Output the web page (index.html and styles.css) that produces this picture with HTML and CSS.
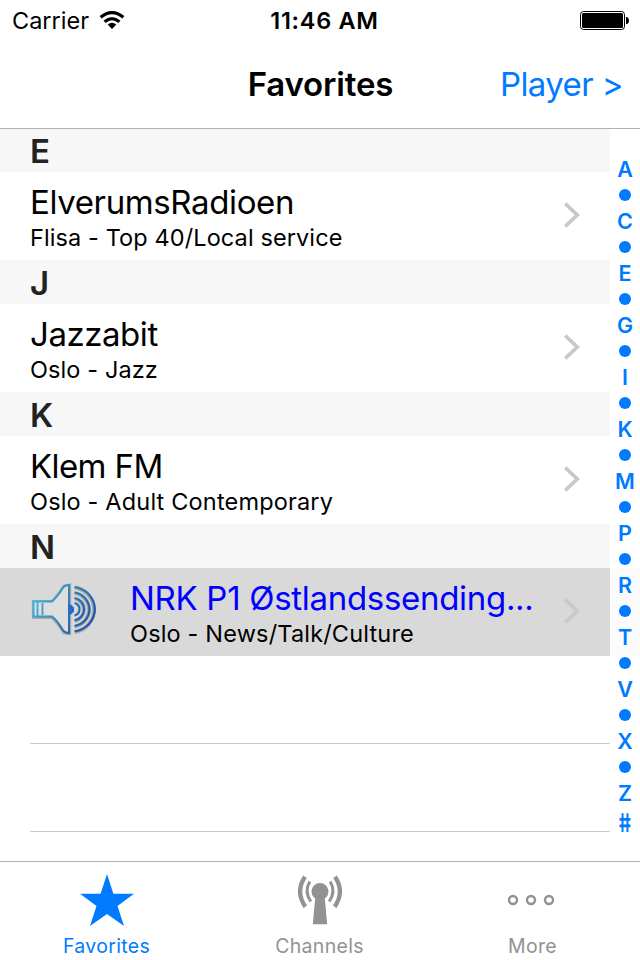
FILE: index.html
```html
<!DOCTYPE html>
<html lang="en">
<head>
<meta charset="utf-8">
<title>Favorites</title>
<link rel="stylesheet" href="styles.css">
</head>
<body>
<svg class="defs" width="0" height="0" aria-hidden="true">
  <symbol id="chevron" viewBox="0 0 18 28"><path d="M2.2 2.6 14.3 14 2.2 25.4" fill="none" stroke="#c7c7cc" stroke-width="3.6"/></symbol>
</svg>
<div class="screen">
  <div class="status">
    <div class="carrier"><span>Carrier</span>
      <svg class="wifi" width="26" height="18" viewBox="0 0 26 18"><g fill="none" stroke="#000" stroke-width="3.2"><path d="M1.6 6.3Q13-3 24.4 6.3"/><path d="M5.6 10.8Q13 4.6 20.4 10.8"/></g><path d="M8.7 13.5Q13 10 17.3 13.5L13 18Z"/></svg>
    </div>
    <div class="time">11:46 AM</div>
    <svg class="battery" width="50" height="20" viewBox="0 0 50 20"><rect x=".5" y=".5" width="44" height="18" rx="3" fill="#fff" stroke="#000"/><rect x="2" y="2" width="41" height="15" rx="1.5"/><path d="M46 6h1.2q1.8 1.2 1.8 3.5t-1.8 3.5H46Z"/></svg>
  </div>
  <header class="nav">
    <h1 class="title">Favorites</h1>
    <a class="player">Player &gt;</a>
  </header>
  <main class="content">
    <div class="list">
      <h2 class="section">E</h2>
      <div class="row"><div class="text"><div class="name n1">ElverumsRadioen</div><div class="sub s1">Flisa - Top 40/Local service</div></div><svg class="chev"><use href="#chevron"/></svg></div>
      <h2 class="section">J</h2>
      <div class="row"><div class="text"><div class="name n2">Jazzabit</div><div class="sub s1">Oslo - Jazz</div></div><svg class="chev"><use href="#chevron"/></svg></div>
      <h2 class="section">K</h2>
      <div class="row"><div class="text"><div class="name n3">Klem FM</div><div class="sub s2">Oslo - Adult Contemporary</div></div><svg class="chev"><use href="#chevron"/></svg></div>
      <h2 class="section">N</h2>
      <div class="row selected">
        <svg class="speaker" width="70" height="56" viewBox="30 581 70 56">
          <defs><linearGradient id="blue" gradientUnits="userSpaceOnUse" x1="35" y1="595" x2="90" y2="630"><stop offset="0" stop-color="#3fb9df"/><stop offset=".5" stop-color="#2f7fb5"/><stop offset="1" stop-color="#164fb0"/></linearGradient></defs>
          <g fill="none" stroke="#888" stroke-width="3.8" opacity=".6" transform="translate(.3 .5)"><path d="M33.5 601.5H52Q59 594 64 586L69 585V633L64 632Q59 623 52 616.5H33.5Z"/><path d="M74.5 587A22.5 22.5 0 0 1 74.5 631.5M74.5 592.5A17 17 0 0 1 74.5 626M74.5 598A11.5 11.5 0 0 1 74.5 620.5"/></g>
          <path d="M33.5 601.5H52C57 597 61 591 63.5 587Q65.5 585 69 585V633Q65.5 633 63.5 631C61 627 57 620 52 616.5H33.5Z" fill="#dedede" stroke="url(#blue)" stroke-width="2"/>
          <path d="M37.5 602V616M42.5 603V615" fill="none" stroke="url(#blue)" stroke-width="1.8"/>
          <path d="M74.5 587A22.5 22.5 0 0 1 74.5 631.5M74.5 592.5A17 17 0 0 1 74.5 626M74.5 598A11.5 11.5 0 0 1 74.5 620.5M74.5 603A6.5 6.5 0 0 1 74.5 615.5" transform="translate(-4.47 0) scale(1.06 1)" fill="none" stroke="url(#blue)" stroke-width="2.1"/>
          <path d="M68 604.5h3l3 3v4l-3 3h-3z" fill="#2469c8"/>
        </svg>
        <div class="text"><div class="name n4">NRK P1 Østlandssending...</div><div class="sub s2">Oslo - News/Talk/Culture</div></div><svg class="chev"><use href="#chevron"/></svg></div>
      <div class="row empty"></div>
      <div class="row empty"></div>
    </div>
    <nav class="index">
      <b>A</b><i></i><b>C</b><i></i><b>E</b><i></i><b>G</b><i></i><b>I</b><i></i><b>K</b><i></i><b>M</b><i></i><b>P</b><i></i><b>R</b><i></i><b>T</b><i></i><b>V</b><i></i><b>X</b><i></i><b>Z</b><b class="hash">#</b>
    </nav>
  </main>
  <footer class="tabs">
    <div class="tab active"><svg width="60" height="60" viewBox="77 870 60 60"><path d="M107 874 113.4 893.7H134L117.5 906 124 926 107 914 90 926 96.5 906 80 893.7H100.6Z" fill="#007aff"/></svg><span>Favorites</span></div>
    <div class="tab"><svg width="60" height="60" viewBox="290 870 60 60"><g fill="#929292"><circle cx="320" cy="891.5" r="8.5"/><path d="M315.5 895H324.5L327.2 924.3H312.8Z"/></g><g fill="none" stroke="#929292"><path d="M305 876.8Q295 891.5 305.3 906.7M335 876.8Q345 891.5 334.7 906.7" stroke-width="4.3"/><path d="M309.8 881.5Q303.8 891.5 310.8 901.5M330.2 881.5Q336.2 891.5 329.2 901.5" stroke-width="3"/></g></svg><span>Channels</span></div>
    <div class="tab"><svg width="60" height="60" viewBox="503 870 60 60"><g fill="none" stroke="#929292" stroke-width="2.4"><circle cx="513" cy="900" r="4"/><circle cx="531" cy="900" r="4"/><circle cx="549" cy="900" r="4"/></g></svg><span>More</span></div>
  </footer>
</div>
</body>
</html>
```
FILE: styles.css
```css
* { box-sizing: border-box; }
body { margin: 0; background: #fff; color: #000; font-family: Inter, "Liberation Sans", sans-serif; }
h1, h2 { margin: 0; }
.defs { position: absolute; }
.screen { width: 640px; height: 960px; display: flex; flex-direction: column; overflow: hidden; }
.status { height: 40px; display: grid; grid-template-columns: 1fr auto 1fr; line-height: 40px; font-size: 23.5px; padding: 0 10px 0 12px; }
.carrier { display: flex; }
.wifi { margin: 11px 0 0 10px; }
.time { font-weight: 600; padding: 1px 0 0 7px; letter-spacing: .7px; }
.carrier span { padding-top: 1px; }
.battery { justify-self: end; margin-top: 11px; }
.nav { height: 89px; display: grid; grid-template-columns: 1fr auto 1fr; line-height: 88px; border-bottom: 1px solid #b2b2b2; white-space: nowrap; }
.title { grid-column: 2; font-size: 33px; font-weight: 600; letter-spacing: -.15px; padding-left: 1px; }
.player { color: #007aff; font-size: 33px; justify-self: end; padding-right: 17px; letter-spacing: -.6px; }
.content { height: 732px; display: grid; grid-template-columns: 610px 30px; }
.section { height: 44px; padding-left: 30px; background: #f7f7f7; color: #222; font-size: 33px; line-height: 46px; font-weight: 600; }
.section:first-child { height: 43px; line-height: 44px; }
.row { height: 88px; display: flex; padding: 0 29px 0 30px; }
.text { flex: 1; padding-top: 10px; white-space: nowrap; }
.name { font-size: 33px; line-height: 40px; height: 40px; }
.n1 { letter-spacing: -.38px; }
.n2 { letter-spacing: -.45px; }
.n3 { letter-spacing: -.6px; }
.n4 { letter-spacing: -.3px; }
.sub { font-size: 23.5px; line-height: 32px; }
.s1 { letter-spacing: .1px; }
.s2 { letter-spacing: .17px; }
.chev { width: 18px; height: 28px; margin-top: 29px; }
.selected { background: #d9d9d9; box-shadow: 30px 0 0 #fbfbfb; }
.selected .name { color: #00f; }
.speaker { margin: 13px 30px 0 0; }
.empty { margin-left: 30px; padding: 0; border-bottom: 1px solid #c8c7cc; }
.index { position: relative; display: flex; flex-direction: column; align-items: center; padding-top: 27px; color: #007aff; }
.index b { height: 26px; line-height: 26px; font-size: 21.5px; font-weight: 600; }
.index i { width: 12px; height: 12px; border-radius: 50%; background: #007aff; margin: 7px 0; }
.index .hash { transform: translateY(3px) scale(.9, 1.2) skewX(9deg); }
.tabs { flex: 1; display: grid; grid-template-columns: 213px 213px 213px; border-top: 1px solid #b2b2b2; color: #929292; font-size: 19.5px; letter-spacing: .32px; }
.tab { display: flex; flex-direction: column; align-items: center; padding-top: 8px; }
.tab span { line-height: 24px; margin-top: 4px; }
.active { color: #007aff; }
```
